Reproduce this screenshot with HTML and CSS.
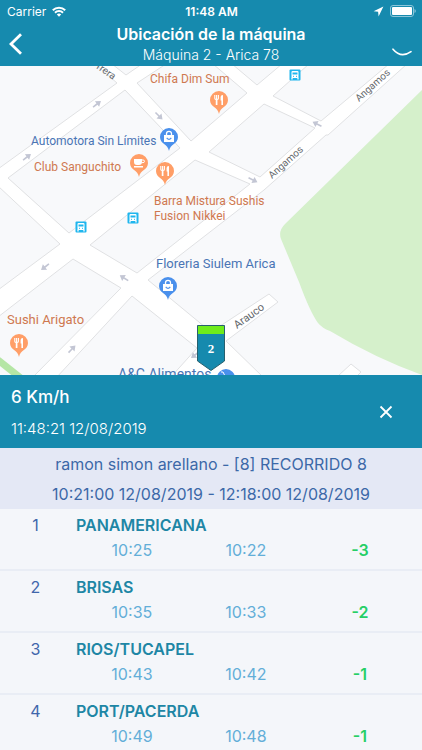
FILE: index.html
```html
<!DOCTYPE html>
<html lang="es">
  <head>
    <meta charset="UTF-8" />
    <meta name="viewport" content="width=device-width, initial-scale=1.0" />
    <title>Ubicación de la máquina</title>
    <link rel="stylesheet" href="styles.css">
  </head>
  <body>
    <div class="app">
      <header class="header">
        <div class="status-bar">
          <div class="carrier">
            <span>Carrier</span>
            <svg width="14" height="11" viewBox="0 0 14 11" fill="none" stroke="#fff" stroke-width="2">
              <path d="M.8 4.2a8.8 8.8 0 0 1 12.4 0" />
              <path d="M3 6.7a5.6 5.6 0 0 1 8 0" />
              <path d="M7 10.8 4.8 8.5a3.2 3.2 0 0 1 4.4 0z" fill="#fff" stroke="none" />
            </svg>
          </div>
          <div class="clock">11:48 AM</div>
          <div class="battery">
            <svg width="11" height="11" viewBox="0 0 11 11" fill="#fff">
              <path d="M10.4.6.6 5.3l4.5.5.5 4.6z" />
            </svg>
            <svg width="26" height="12" viewBox="0 0 26 12">
              <rect x=".5" y=".5" width="23" height="11" rx="2.5" fill="none" stroke="#8cc6da" />
              <rect x="2" y="2" width="20" height="8" rx="1" fill="#fff" />
              <path d="M24.5 4v4q1.3-.6 1.3-2t-1.3-2z" fill="#8cc6da" />
            </svg>
          </div>
        </div>
        <div class="nav">
          <button class="icon-btn back" aria-label="Volver">
            <svg width="14" height="22" viewBox="0 0 14 22" fill="none" stroke="#fff" stroke-width="2.8">
              <path d="M12 1.2 2 11l10 9.8" />
            </svg>
          </button>
          <div class="titles">
            <h1>Ubicación de la máquina</h1>
            <p>Máquina 2 - Arica 78</p>
          </div>
          <div class="spinner">
            <svg width="20" height="8" viewBox="0 0 20 8" fill="none" stroke="#fff" stroke-width="1.6" stroke-linecap="round">
              <path d="M1 1.2q8 9.5 18 2.4" />
            </svg>
          </div>
        </div>
      </header>

      <svg class="map" viewBox="0 66 422 309" role="img" aria-label="Mapa">
        <defs>
          <path id="pin" d="M0 14C-1 7-9 7-9 0a9 9 0 0 1 18 0C9 7 1 7 0 14z" />
          <g id="bag">
            <path d="M-5-2H5V5H-5z" fill="#fff" />
            <path d="M-2.5-2v-1.2a2.5 2.5 0 0 1 5 0V-2" fill="none" stroke="#fff" stroke-width="1.3" />
            <path d="M-2.3.8q2.3 3 4.6 0" fill="none" stroke="#4a90ec" stroke-width="1.2" />
          </g>
          <g id="fork" fill="none" stroke="#fff">
            <path d="M-4.2-5v3.5q0 1 1.8 1t1.8-1V-5M-2.4-5v5" stroke-width="1.1" />
            <path d="M-2.4-.5V5" stroke-width="1.7" />
            <path d="M2.4 5V.5H1.6V-3q0-2 2.4-2V5z" fill="#fff" stroke="none" />
          </g>
          <g id="bus">
            <rect x="-5.5" y="-5.5" width="11" height="11" rx="1" fill="#1fb6ee" />
            <rect x="-3.5" y="-4" width="7" height="7" rx="1" fill="#fff" />
            <path d="M-2.5-2.5h5v2h-5z" fill="#1fb6ee" />
            <path d="M-3 2.5v2M3 2.5v2" stroke="#fff" stroke-width="1.3" />
            <path d="M-2 1.3h1M1 1.3h1" stroke="#1fb6ee" />
          </g>
          <path id="arrow" d="M-5-.8H0V-3.5L5 0 0 3.5V.8H-5z" fill="#c3c6d4" />
        </defs>

        <rect y="66" width="422" height="309" fill="#fff" />

        <!-- manzanas -->
        <g class="blocks">
          <path d="M-2 64H95L117 83-2 169z" />
          <path d="M112 64 126 75 142 64z" />
          <path d="M166 64 137 83 191 141 247 93 213 64z" />
          <path d="M232 64 257 85 282 64z" />
          <path d="M309 64 273 96 321 121 389 64z" />
          <path d="M264 104 315 128 260 177 209 152z" />
          <path d="M195 160 250 184 137 273 90 245z" />
          <path d="M125 90 180 148 69 233 8 178z" />
          <path d="M-2 186 60 244-2 290z" />
          <path d="M73 259 121 288 32 378H-2V317z" />
          <path d="M132 296 197 348 170 378H56z" />
          <path d="M407 64 328 135H326L264 190 228 218 148 280 211 332 269 294 278 302 226 341 264 378H424V64z" />
        </g>
        <path d="M338 376 351 364 361 372 357 376z" fill="#fff" stroke="#e0e1e3" />

        <!-- zonas verdes -->
        <path d="M422 90 285 224Q278 231 281 239L299 282Q310 312 318 323 322 328 330 331 375 358 422 375z" fill="#d5f0cb" />
        <path d="M-2 360 22 379" stroke="#b5e6a5" stroke-width="7" />

        <use href="#arrow" transform="translate(97 104) rotate(-38)" />
        <use href="#arrow" transform="translate(27 157) rotate(-38)" />
        <use href="#arrow" transform="translate(159 116) rotate(45)" />
        <use href="#arrow" transform="translate(317 124) rotate(207)" />
        <use href="#arrow" transform="translate(253 180) rotate(27)" />
        <use href="#arrow" transform="translate(45 267) rotate(142)" />
        <use href="#arrow" transform="translate(124 278) rotate(212)" />
        <use href="#arrow" transform="translate(72 349) rotate(-46)" />
        <use href="#arrow" transform="translate(195 355) rotate(142)" />

        <g class="street">
          <text transform="translate(96 68) rotate(35)">rrera</text>
          <text transform="translate(359 102) rotate(-42)">Angamos</text>
          <text transform="translate(272 179) rotate(-42)">Angamos</text>
          <text class="near" transform="translate(237 329) rotate(-36)">Arauco</text>
        </g>

        <use href="#bus" x="295" y="75" />
        <use href="#bus" x="133" y="218" />
        <use href="#bus" x="81" y="227" />

        <g class="food">
          <use href="#pin" x="219" y="100" />
          <use href="#pin" x="139" y="163" />
          <use href="#pin" x="165" y="171" />
          <use href="#pin" x="19" y="343" />
          <text class="far" x="150" y="83">Chifa Dim Sum</text>
          <text class="far" x="34" y="171">Club Sanguchito</text>
          <text class="far" x="154" y="205">Barra Mistura Sushis</text>
          <text class="far" x="154" y="220">Fusion Nikkei</text>
          <text x="7" y="324">Sushi Arigato</text>
        </g>
        <use href="#fork" x="219" y="100" />
        <use href="#fork" x="165" y="171" />
        <use href="#fork" x="19" y="343" />
        <path d="M134 159h8v3q0 3-3 3h-2q-3 0-3-3zM134 166h9v1.4h-9z" fill="#fff" />
        <path d="M142 160h1q1.5 0 1.5 1.3t-1.5 1.3h-1" fill="none" stroke="#fff" />

        <g class="shop">
          <use href="#pin" x="169" y="137" />
          <use href="#pin" x="168" y="286" />
          <use href="#pin" x="226" y="378" />
          <text class="far" x="31" y="145">Automotora Sin Límites</text>
          <text x="156" y="268">Floreria Siulem Arica</text>
          <text class="near" x="118" y="379">A&amp;C Alimentos</text>
        </g>
        <use href="#bag" x="169" y="137" />
        <use href="#bag" x="168" y="286" />
        <path d="M221 372h2l2 4" fill="none" stroke="#fff" />

        <!-- máquina -->
        <path d="M197.5 325.5h27V361L211 370.5 197.5 361z" fill="#168aae" stroke="#28606e" />
        <path d="M198 326h26v8h-26z" fill="#6fec1c" />
        <text class="machine" x="211" y="353">2</text>
      </svg>

      <section class="speed">
        <div>
          <h2>6 Km/h</h2>
          <time>11:48:21 12/08/2019</time>
        </div>
        <button class="icon-btn close" aria-label="Cerrar">
          <svg width="14" height="14" viewBox="0 0 14 14" fill="none" stroke="#fff" stroke-width="1.8">
            <path d="M1.5 1.5l11 11M12.5 1.5l-11 11" />
          </svg>
        </button>
      </section>

      <section class="trip">
        <p>ramon simon arellano - [8] RECORRIDO 8</p>
        <p>10:21:00 12/08/2019 - 12:18:00 12/08/2019</p>
      </section>

      <div class="stops">
        <table>
          <colgroup>
            <col class="col-num" />
            <col class="col-time" />
            <col class="col-time" />
            <col />
          </colgroup>
          <tbody>
            <tr class="stop">
              <td class="num" rowspan="2">1</td>
              <th colspan="3">PANAMERICANA</th>
            </tr>
            <tr class="times">
              <td>10:25</td>
              <td>10:22</td>
              <td class="diff">-3</td>
            </tr>
          </tbody>
          <tbody>
            <tr class="stop">
              <td class="num" rowspan="2">2</td>
              <th colspan="3">BRISAS</th>
            </tr>
            <tr class="times">
              <td>10:35</td>
              <td>10:33</td>
              <td class="diff">-2</td>
            </tr>
          </tbody>
          <tbody>
            <tr class="stop">
              <td class="num" rowspan="2">3</td>
              <th colspan="3">RIOS/TUCAPEL</th>
            </tr>
            <tr class="times">
              <td>10:43</td>
              <td>10:42</td>
              <td class="diff">-1</td>
            </tr>
          </tbody>
          <tbody>
            <tr class="stop">
              <td class="num" rowspan="2">4</td>
              <th colspan="3">PORT/PACERDA</th>
            </tr>
            <tr class="times">
              <td>10:49</td>
              <td>10:48</td>
              <td class="diff">-1</td>
            </tr>
          </tbody>
        </table>
      </div>
    </div>
  </body>
</html>
```
FILE: styles.css
```css
* {
  box-sizing: border-box;
}
body {
  margin: 0;
  font-family: Inter, "Liberation Sans", sans-serif;
  background-color: #f4f6fa;
}
h1,
h2,
p {
  margin: 0;
}
svg {
  display: block;
}
.app {
  display: flex;
  flex-direction: column;
  height: 100vh;
  overflow: hidden;
}
.header {
  flex: none;
  background-color: #168aae;
  color: white;
}
.status-bar {
  display: grid;
  grid-template-columns: 1fr auto 1fr;
  align-items: center;
  height: 22px;
  padding: 0 6px 0 7px;
  font-size: 12px;
}
.carrier,
.battery {
  display: flex;
  align-items: center;
  gap: 6px;
}
.battery {
  justify-content: flex-end;
}
.clock {
  font-weight: 600;
}
.nav {
  display: grid;
  grid-template-columns: 40px 1fr 40px;
  height: 44px;
}
.titles {
  text-align: center;
}
.titles h1 {
  font-size: 16px;
  line-height: 24px;
  font-weight: 600;
}
.titles p {
  font-size: 14px;
  line-height: 18px;
  font-weight: 300;
}
.icon-btn {
  display: flex;
  align-items: center;
  border: none;
  padding: 0;
  background: none;
  cursor: pointer;
}
.back {
  padding-left: 9px;
}
.spinner {
  display: flex;
  align-items: flex-end;
  justify-content: flex-end;
  padding: 0 10px 10px 0;
}
.map {
  flex: none;
  width: 100%;
  height: auto;
}
.map text {
  font-family: Roboto, sans-serif;
  font-size: 13px;
}
.map .far {
  font-size: 12px;
}
.map .near {
  font-size: 14px;
}
.map .blocks {
  fill: #f8f9fb;
  stroke: #e0e1e3;
}
.map .street text {
  font-size: 10px;
  fill: #66696d;
}
.map .street .near {
  font-size: 11px;
}
.food {
  fill: #ff9e67;
}
.food text {
  fill: #cf7850;
}
.shop {
  fill: #4a90ec;
}
.shop text {
  fill: #4a75b5;
}
.map .machine {
  font-family: "Liberation Serif", serif;
  font-weight: bold;
  text-anchor: middle;
  fill: white;
}
.speed {
  display: flex;
  flex: none;
  justify-content: space-between;
  height: 73px;
  padding: 10px 29px 0 11px;
  background-color: #168aae;
  color: white;
}
.speed h2 {
  font-size: 17px;
  line-height: 24px;
  font-weight: 500;
}
.speed time {
  display: block;
  margin-top: 10px;
  font-size: 15px;
  line-height: 20px;
  font-weight: 300;
}
.close {
  height: 54px;
}
.trip {
  flex: none;
  padding-top: 1px;
  background-color: #e4e8f5;
  color: #3c68a8;
  text-align: center;
  font-size: 16px;
  line-height: 30px;
}
.stops {
  flex: 1;
  min-height: 0;
  overflow-y: auto;
  scrollbar-width: none;
}
.stops table {
  width: 100%;
  table-layout: fixed;
  border-collapse: separate;
  border-spacing: 0;
  font-size: 16px;
  line-height: 20px;
}
.col-num {
  width: 18%;
}
.col-time {
  width: 27%;
}
.stops td,
.stops th {
  padding: 0;
}
.stops .num {
  padding: 6px 5px 0 0;
  vertical-align: top;
  text-align: center;
  color: #4066ab;
  border-bottom: 2px solid #e9edf5;
}
.stop th {
  padding: 6px 0 5px;
  text-align: left;
  font-weight: 600;
  color: #1e86a5;
}
.stops .times td {
  padding: 0 2px 9px 0;
  text-align: center;
  color: #63aed8;
  border-bottom: 2px solid #e9edf5;
}
.stops .times .diff {
  padding-right: 6px;
  font-weight: 600;
  color: #25cf66;
}
```
